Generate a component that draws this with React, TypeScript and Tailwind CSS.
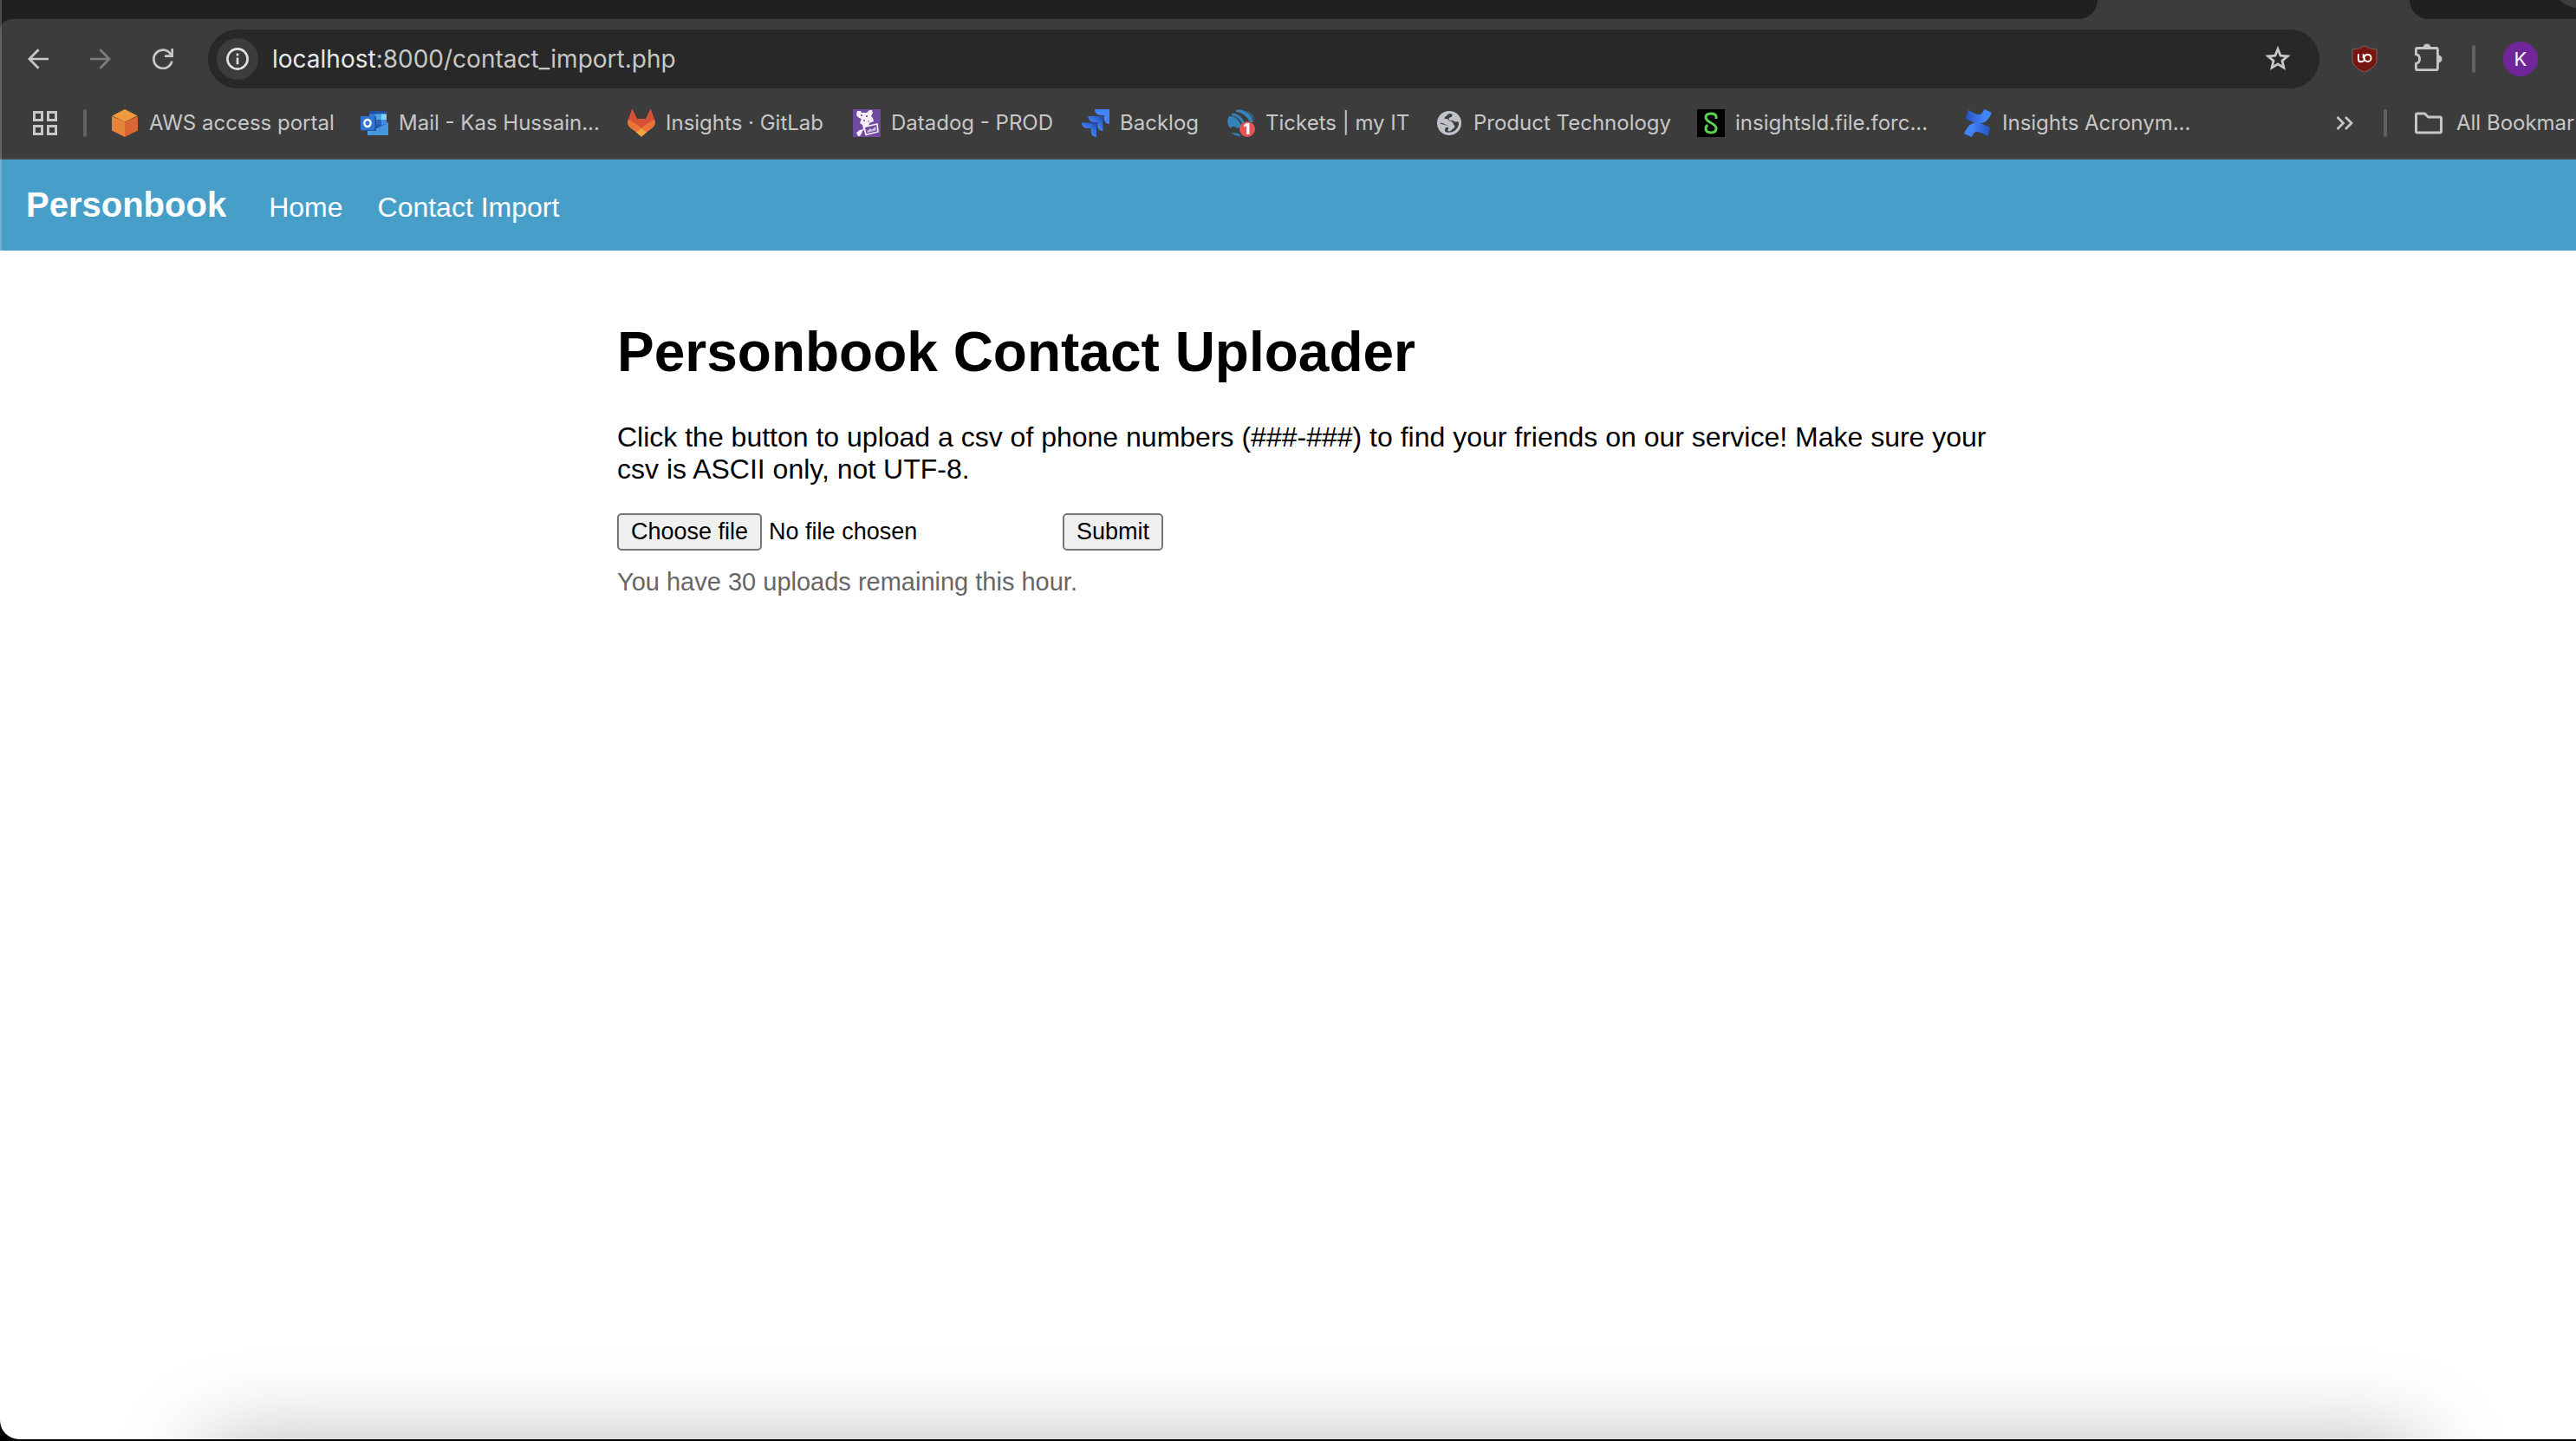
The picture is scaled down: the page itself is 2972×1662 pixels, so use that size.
import type { ReactNode } from "react";

const CHROME_FONT = "font-['Inter','Liberation_Sans',sans-serif]";
const PAGE_FONT = "font-['Liberation_Sans',Arial,sans-serif]";

function BackIcon() {
  return (
    <svg className="size-6" viewBox="0 0 24 24" fill="none" stroke="currentColor" strokeWidth="2.7">
      <path d="M24 12H2M12.5 1.2 1.9 12l10.6 10.8" />
    </svg>
  );
}

function ForwardIcon() {
  return (
    <svg className="size-6" viewBox="0 0 24 24" fill="none" stroke="currentColor" strokeWidth="2.7">
      <path d="M0 12h22M11.5 1.2 22.1 12 11.5 22.8" />
    </svg>
  );
}

function ReloadIcon() {
  return (
    <svg className="size-6" viewBox="0 0 24 24" fill="none" stroke="currentColor" strokeWidth="2.7">
      <path d="M22.3 14.6A10.6 10.6 0 1 1 21.2 7" />
      <path d="M22.7 0v8.6H14" />
    </svg>
  );
}

function InfoIcon() {
  return (
    <svg className="size-[26px]" viewBox="0 0 26 26" fill="none" stroke="currentColor" strokeWidth="2.6">
      <circle cx="13" cy="13" r="11.6" />
      <path d="M13 11.6v7.6M13 6.6v2.8" />
    </svg>
  );
}

function StarIcon() {
  return (
    <svg className="size-8" viewBox="0 0 32 32" fill="none" stroke="currentColor" strokeWidth="2.8">
      <path d="M16 4.6 19 12.1l8.2.7-6.2 5.3 1.9 8L16 21.8l-6.9 4.3 1.9-8-6.2-5.3 8.2-.7z" />
    </svg>
  );
}

function ShieldIcon() {
  return (
    <svg className="size-8" viewBox="0 0 32 32" fill="none">
      <path d="M16 .7c4 2.600 8.500 4 14 4.300v12c0 7-7 11-14 14.300C9 28 2 24 2 17V5C7.500 4.700 12 3.300 16 .7z" fill="#77160e" stroke="#7d6462" strokeWidth="1" />
      <path d="M8.900 10.200v6c0 2 1 3.100 3 3.100 2.600 0 4.200-1.800 4.200-4.200M14.700 10.200v5" stroke="#fff" strokeWidth="1.900" />
      <circle cx="19.600" cy="14.900" r="4" stroke="#fff" strokeWidth="2" />
    </svg>
  );
}

function PuzzleIcon() {
  return (
    <svg className="size-8" viewBox="0 0 32 32">
      <path d="M9.500 5a4.500 4.500 0 0 1 9 0zM27 13.500a4.500 4.500 0 0 1 0 9z" fill="currentColor" />
      <path d="M1.400 12.700V7.200c0-1 .7-1.700 1.700-1.700h21.600c1 0 1.700.7 1.700 1.700v21.700c0 1-.7 1.700-1.700 1.700H3.100c-1 0-1.700-.7-1.700-1.700v-5.600c2.700-.6 4.200-2.700 4.200-5.300s-1.500-4.700-4.200-5.300z" fill="none" stroke="currentColor" strokeWidth="2.800" />
    </svg>
  );
}

function AppsIcon() {
  return (
    <svg className="size-7" viewBox="0 0 28 28" fill="none" stroke="currentColor" strokeWidth="3">
      <path d="M1.500 1.500h9v9h-9zM17.500 1.500h9v9h-9zM1.500 17.500h9v9h-9zM17.500 17.500h9v9h-9z" />
    </svg>
  );
}

function CubeIcon() {
  return (
    <svg className="size-8" viewBox="0 0 32 32">
      <path d="M16 0 30.500 7.500 16 14.500 1.500 7.500z" fill="#f09a3e" />
      <path d="M1 8l15 6.500V32L1 24.500z" fill="#e6833a" />
      <path d="M31 8 16 14.500V32l15-7.500z" fill="#da6733" />
    </svg>
  );
}

function OutlookIcon() {
  return (
    <svg className="size-8" viewBox="0 0 32 32">
      <path d="M10 3h20v14H10z" fill="#2f7fd4" />
      <path d="M10 2h20v3.500H10z" fill="#2250a0" />
      <path d="M24 5.500h6V12h-6z" fill="#7ad6fb" />
      <path d="M17 5.500h7V12h-7z" fill="#4aa6ea" />
      <path d="M17 12h7v6h-7z" fill="#2c63bb" />
      <path d="M24 12h6v6h-6z" fill="#3f92df" />
      <path d="M8 18l16 1 8-4v15H8z" fill="#4a9ee2" />
      <path d="M32 15v15L18 20.500z" fill="#3d86d6" />
      <path d="M32 14.500 17 23v-5h8z" fill="#2556a5" />
      <path d="M8 30 32 15.500V30z" fill="#4494de" />
      <rect x="1" y="8" width="17" height="17" rx="1" fill="#234f96" />
      <rect x="0" y="8" width="16.500" height="16" rx="1" fill="#2f75d0" />
      <ellipse cx="8" cy="16" rx="3.600" ry="4" fill="none" stroke="#fff" strokeWidth="2.400" />
    </svg>
  );
}

function GitlabIcon() {
  return (
    <svg className="size-8" viewBox="0 0 32 32">
      <path d="M6 .5 11 11h10L26 .5c.5-.6 1-.5 1.300.2L31.500 13 16 24 .5 13 4.700.7C5 0 5.500-.1 6 .5z" fill="#d65136" />
      <path d="M.5 12.500C4 12.500 8 15 16 22c8-7 12-9.500 15.500-9.500 1 3.500.2 6.500-3 9L16 31.500 3.500 21.500c-3.200-2.500-4-5.500-3-9z" fill="#ec7439" />
      <path d="M16 22l6 4.700-6 5.100-6-5.100z" fill="#f0a43c" />
    </svg>
  );
}

function DatadogIcon() {
  return (
    <svg className="size-8" viewBox="0 0 32 32">
      <path d="M0 0h32v32H0z" fill="#704aa0" />
      <path d="M5 2h4l1 2h6l3-3h3l1 3-2 4 2 2 1 4-5 2-1 5-4 2-3 2-1 3-2 3H6l-2-4 4-3 4-1-1-5-3-2 2-5-3-1-3-3z" fill="#f4effa" />
      <path d="M15 7h2v2h-2zM9 6h2v2H9zM12 12h2v2h-2zM17 14l2-1v2z" fill="#8a68b4" />
      <path d="M13 20.500 28 17l1 9-14 3.500z" fill="#704aa0" stroke="#f4effa" strokeWidth="1.600" />
      <path d="M16 26l4-4 2 1.500 4-3.500 1 4-10 3z" fill="#cbb9e2" />
    </svg>
  );
}

function JiraIcon() {
  return (
    <svg className="size-8" viewBox="0 0 32 32">
      <defs>
        <linearGradient id="jira" x1="1" y1="0" x2="0.3" y2="0.8">
          <stop offset="0.1" stopColor="#2350b8" />
          <stop offset="0.8" stopColor="#4384fb" />
        </linearGradient>
      </defs>
      <path d="M15 0h17v17c-3.800 0-6.200-2.600-6.200-6V7h-4C18 7 15 4 15 0z" fill="#4384fb" />
      <path d="M7.500 8H24.500v17c-3.800 0-6.200-2.600-6.200-6v-4h-4c-3.800 0-6.800-3-6.800-7z" fill="url(#jira)" />
      <path d="M0 15.500h17V32c-3.800 0-6.200-2.600-6.200-6v-4h-4C3 22 0 19.500 0 15.500z" fill="url(#jira)" />
    </svg>
  );
}

function TicketsIcon() {
  return (
    <svg className="size-8" viewBox="0 0 32 32">
      <path d="M2 8c7-1 13 5 14 12l-5 2c-2-3-5-3-7 0C0 20-1 13 2 8zM5 5c4-1 9 1 13 7l2 4-3 1C15 11 10 8 5 7zM10 1c9-2 18 4 20 14h-4C23 8 17 4 10 3zM22 2c5 2 9 6 9 11-2-5-5-8-9-11zM4 27c4 3 8 4 12 4l-3-3z" fill="#3482b8" />
      <circle cx="23" cy="23" r="9" fill="#e45450" />
      <text x="22.500" y="29" textAnchor="middle" fontSize="18" fontWeight="800" fill="#fff" fontFamily="Inter, sans-serif">1</text>
    </svg>
  );
}

function GlobeIcon() {
  return (
    <svg className="mr-[2px] size-7" viewBox="0 0 28 28">
      <circle cx="14" cy="14" r="14" fill="#bfc2c9" />
      <path d="M3 12c4-.5 7-.5 9.500 0 2.500.4 3.500 2 3.500 3.800 2.500 0 3.800 1.200 3.500 3.400-.3 2.300-2.500 2.800-4 5.800-2 .2-4-.2-6-1.200 0-1.400.2-2.300 1-2.800h1.500v-3.500H9.500C6.500 17.500 3.500 15 3 12z" fill="#bfc2c9" />
      <path d="M3 14c3.500-.8 5.500 1.800 8 2.200 1.500.3 2 1 2 2.800h-2.500c-1 0-1.500 2-1.500 4.500C12 25.500 17 25 20.500 22.500c3-2.300 4.700-5.500 4.500-9-.2-.8-1-1.300-2-1.300-2.500.5-4 0-4.500-1.200h-3c-2 0-2.500-2.200-1-3.500 2.500 0 3-1 3-3.500L16 3c-3 0-4.500 1-5 3-1.500 0-2.500 1-2.500 3 3 0 5 .5 5.500 2.500 3.500.5 5 2 5 4.500 2 .8 2 3-.5 4.500-1.500 1-2.500 2.500-4.500 3-2 0-2-1.500-1-3V17c-3-.5-6-1-10-3z" fill="#3c3c3c" fillRule="evenodd" />
    </svg>
  );
}

function SIcon() {
  return (
    <svg className="size-8" viewBox="0 0 32 32">
      <path d="M0 0h32v32H0z" fill="#000" />
      <path d="M22 11V9c0-2.500-2.500-4-6-4s-6 1.500-6 4.500c0 6 12 6.500 12 12.500 0 3.500-2.500 5-6 5s-6-1.500-6-5c0-2 1-3 2.500-3.500" fill="none" stroke="#5bd350" strokeWidth="3" />
    </svg>
  );
}

function ConfluenceIcon() {
  return (
    <svg className="size-8" viewBox="0 0 32 32">
      <defs>
        <linearGradient id="confTop" x1="0" y1="0" x2="1" y2="0">
          <stop offset="0" stopColor="#2552bd" />
          <stop offset="0.7" stopColor="#4384fb" />
        </linearGradient>
        <linearGradient id="confBottom" x1="0" y1="0" x2="1" y2="0">
          <stop offset="0.3" stopColor="#4384fb" />
          <stop offset="1" stopColor="#2552bd" />
        </linearGradient>
      </defs>
      <path d="M5 .8c6 3.400 9.500 5.700 13 5.200 2.500-.4 3.500-3 5.500-6L32 4c-4 8.500-8 12.500-14.500 12.500C12 16.500 7 13.500 1.500 10.700z" fill="url(#confTop)" />
      <path d="M27 31.200c-6-3.400-9.500-5.700-13-5.200-2.500.4-3.500 3-5.500 6L0 28c4-8.500 8-12.500 14.500-12.500 5.500 0 10.500 3 16 5.800z" fill="url(#confBottom)" />
    </svg>
  );
}

function OverflowIcon() {
  return (
    <svg className="size-5" viewBox="0 0 20 20" fill="none" stroke="currentColor" strokeWidth="2.700">
      <path d="M1.500 3 8.500 10l-7 7M11 3l7 7-7 7" />
    </svg>
  );
}

function FolderIcon() {
  return (
    <svg className="size-8" viewBox="0 0 32 32" fill="none" stroke="currentColor" strokeWidth="3" strokeLinejoin="round">
      <path d="M1.500 6.500c0-1 .5-1.500 1.500-1.500h8.500L15.500 9H29c1 0 1.500.5 1.500 1.500v15c0 1-.5 1.500-1.500 1.500H3c-1 0-1.500-.5-1.500-1.500z" />
    </svg>
  );
}

function Divider() {
  return <span className="h-8 w-1 shrink-0 rounded-full bg-[#626262]" />;
}

function IconButton({ label, className, children }: { label: string; className: string; children: ReactNode }) {
  return (
    <button type="button" aria-label={label} className={`flex shrink-0 items-center justify-center ${className}`}>
      {children}
    </button>
  );
}

const bookmarks = [
  { label: "AWS access portal", icon: <CubeIcon />, width: "w-[288px]" },
  { label: "Mail - Kas Hussain...", icon: <OutlookIcon />, width: "w-[308px]" },
  { label: "Insights · GitLab", icon: <GitlabIcon />, width: "w-[260px]" },
  { label: "Datadog - PROD", icon: <DatadogIcon />, width: "w-[264px]" },
  { label: "Backlog", icon: <JiraIcon />, width: "w-[168px]" },
  { label: "Tickets | my IT", icon: <TicketsIcon />, width: "w-[242px]" },
  { label: "Product Technology", icon: <GlobeIcon />, width: "w-[300px]" },
  { label: "insightsld.file.forc...", icon: <SIcon />, width: "w-[308px]" },
  { label: "Insights Acronym...", icon: <ConfluenceIcon />, width: "w-[300px]" },
];

function TabStrip() {
  return (
    <div className="relative flex h-[22px] overflow-hidden bg-[#3c3c3c]">
      <div className="flex-1 rounded-br-[22px] bg-[#1f2120]" />
      <div className="w-[360px]" />
      <div className="w-[192px] rounded-bl-[22px] bg-[#1f2120]" />
      <div className="absolute -top-[47px] -right-[30px] size-14 rounded-full bg-[#3c3c3c]" />
    </div>
  );
}

function Toolbar() {
  return (
    <div className="flex h-[92px] items-center pl-8">
      <IconButton label="Back" className="mr-12 size-6">
        <BackIcon />
      </IconButton>
      <IconButton label="Forward" className="mr-12 size-6 text-[#7d7d7d]">
        <ForwardIcon />
      </IconButton>
      <IconButton label="Reload" className="mr-10 size-6">
        <ReloadIcon />
      </IconButton>
      <div className="flex h-[68px] flex-1 items-center rounded-full bg-[#282828] pr-8 pl-[10px]">
        <IconButton label="View site information" className="mr-4 size-12 rounded-full bg-[#3c3c3c] text-[#e3e3e3]">
          <InfoIcon />
        </IconButton>
        <p className="flex-1 text-[28px] leading-9 whitespace-nowrap text-[#c7c7c7]">
          <span className="text-[#e8e8e8]">localhost</span>:8000/contact_import.php
        </p>
        <IconButton label="Bookmark this tab" className="size-8">
          <StarIcon />
        </IconButton>
      </div>
      <div className="flex w-[296px] shrink-0 items-center pl-9">
        <IconButton label="uBlock Origin" className="mr-[42px] size-8">
          <ShieldIcon />
        </IconButton>
        <IconButton label="Extensions" className="mr-[34px] mb-1 size-8">
          <PuzzleIcon />
        </IconButton>
        <Divider />
        <button type="button" aria-label="Profile" className="ml-8 size-10 rounded-full bg-[#70259a] text-[22px] text-white">
          K
        </button>
      </div>
    </div>
  );
}

function BookmarksBar() {
  return (
    <div className="flex h-[70px] items-center border-b-2 border-[#474747] pb-3 pl-[38px] text-2xl whitespace-nowrap">
      <IconButton label="Apps" className="mr-[30px] size-7">
        <AppsIcon />
      </IconButton>
      <Divider />
      <nav aria-label="Bookmarks" className="ml-7 flex flex-1">
        {bookmarks.map((item) => (
          <a key={item.label} href="#" className={`flex shrink-0 items-center gap-3 ${item.width}`}>
            {item.icon}
            <span>{item.label}</span>
          </a>
        ))}
      </nav>
      <div className="flex w-[277px] shrink-0 items-center overflow-hidden">
        <IconButton label="More bookmarks" className="mr-[35px] size-5">
          <OverflowIcon />
        </IconButton>
        <Divider />
        <button type="button" className="ml-8 flex shrink-0 items-center gap-4">
          <FolderIcon />
          <span>All Bookmarks</span>
        </button>
      </div>
    </div>
  );
}

function SiteNav() {
  return (
    <nav className="flex h-[105px] items-baseline bg-[#479fc9] pt-7 pl-[30px] text-[32px] leading-[48px] text-white">
      <a href="#" className="mr-[49px] text-[40px] font-bold">
        Personbook
      </a>
      <a href="#" className="mr-10">
        Home
      </a>
      <a href="#">Contact Import</a>
    </nav>
  );
}

function UploadForm() {
  const button = "h-[43px] rounded-[5px] border-2 border-[#767676] bg-[#efefef] px-[14px] text-[27px] leading-[39px]";
  return (
    <form className="flex text-[27px] leading-[43px]" onSubmit={(event) => event.preventDefault()}>
      <div className="relative flex w-[514px]">
        <input id="contacts" type="file" accept=".csv" className="peer sr-only" />
        <label htmlFor="contacts" className={button}>
          Choose file
        </label>
        <span className="ml-2">No file chosen</span>
      </div>
      <button type="submit" className={button}>
        Submit
      </button>
    </form>
  );
}

export default function App() {
  return (
    <div className="flex min-h-screen flex-col bg-black pb-[2px]">
      <div className="relative flex flex-1 flex-col overflow-hidden rounded-bl-[22px] bg-white">
        <header className={`relative ${CHROME_FONT} text-[#c7c7c7]`}>
          <TabStrip />
          <div className="bg-[#1f2120]">
            <div className="rounded-tl-[14px] bg-[#3c3c3c]">
              <Toolbar />
              <BookmarksBar />
            </div>
          </div>
          <div className={PAGE_FONT}>
            <SiteNav />
          </div>
          <div className="pointer-events-none absolute inset-y-0 left-0 w-[2px] bg-white/20" />
        </header>
        <main className={`flex-1 pt-20 pl-[52px] text-black ${PAGE_FONT}`}>
          <div className="mx-auto max-w-[1600px]">
            <h1 className="mb-[43px] text-[64px] leading-[74px] font-bold">Personbook Contact Uploader</h1>
            <p className="mb-8 text-[32px] leading-[37px]">
              Click the button to upload a csv of phone numbers (###-###) to find your friends on our service! Make sure
              your csv is ASCII only, not UTF-8.
            </p>
            <UploadForm />
            <p className="mt-5 text-[29px] leading-[33px] text-[#666]">You have 30 uploads remaining this hour.</p>
          </div>
        </main>
        <div className="pointer-events-none absolute top-full right-[172px] left-[230px] h-[160px] rounded-[40px] shadow-[0_0_100px_rgba(0,0,0,0.27)]" />
      </div>
    </div>
  );
}
